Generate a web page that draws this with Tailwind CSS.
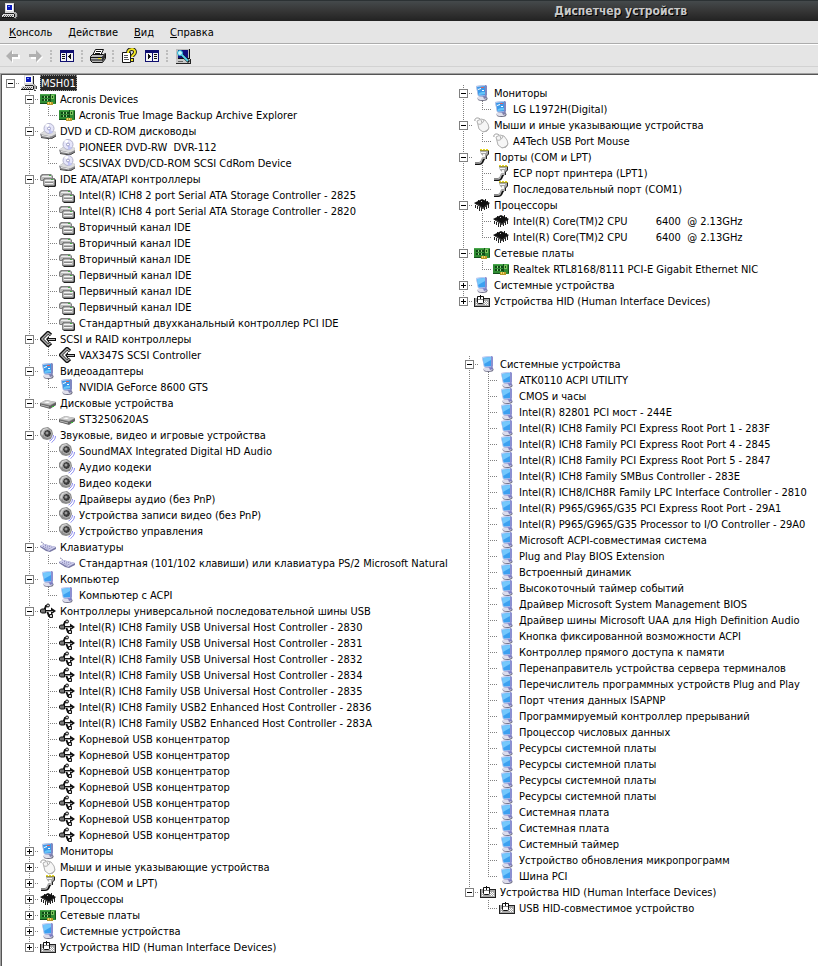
<!DOCTYPE html>
<html lang="ru">
  <head>
    <meta charset="utf-8" />
    <title>Диспетчер устройств</title>
    <script src="https://cdn.jsdelivr.net/npm/@tailwindcss/browser@4"></script>
  </head>
  <body
    class="flex min-h-screen flex-col bg-[#e5e5e5] font-['DejaVu_Sans_Condensed','DejaVu_Sans',sans-serif] text-[11px] leading-4 text-black"
  >
    <!-- icon set -->
    <svg class="hidden">
      <symbol id="pc" viewBox="0 0 16 16">
        <g shape-rendering="crispEdges">
          <path d="M3 0h9v10H3z" fill="#d8d8d8" />
          <path d="M12 1h1v9h-1zM4 10h9v1H4z" fill="#222" />
          <path d="M4 1h7v7H4z" fill="#fff" />
          <path d="M5 2h5v5H5z" fill="#0a18b8" />
          <path d="M6 3h2v1H6z" fill="#7a9cff" />
          <path d="M1 11h11v1H1zM0 12h12v2H0z" fill="#ddd" />
          <path d="M0 14h13v1H0zM12 11h1v3h-1z" fill="#111" />
          <path d="M2 12h1v1H2zM4 12h1v1H4zM6 12h1v1H6zM8 12h1v1H8zM10 12h1v1h-1zM1 13h1v1H1zM3 13h1v1H3zM5 13h1v1H5zM7 13h1v1H7zM9 13h1v1H9z" fill="#555" />
          <path d="M12 9h2v1h1v4h-1v1h-2v-1h1v-3h-1z" fill="#aaa" />
          <path d="M15 11h1v3h-1zM13 15h2v1h-2z" fill="#444" />
        </g>
      </symbol>
      <symbol id="card" viewBox="0 0 16 16">
        <g shape-rendering="crispEdges">
          <path d="M0 3h16v10H0z" fill="#2f8c33" />
          <path d="M0 3h16v1H0z" fill="#4aa84c" />
          <path d="M2 5h2v2H2zM5 5h2v2H5zM8 5h2v2H8zM2 8h2v2H2zM5 8h2v2H5zM8 8h2v2H8z" fill="#0f4a15" />
          <path d="M4 5h1v2H4zM7 5h1v2H7zM4 8h1v2H4zM7 8h1v2H7z" fill="#8fcc80" />
          <path d="M11 4h3v4h-3z" fill="#7cc45c" />
          <path d="M12 5h1v2h-1z" fill="#124f16" />
          <path d="M10 3h1v9h-1zM15 4h1v8h-1zM0 12h7v1H0z" fill="#14501a" />
          <path d="M7 11h6v3H7z" fill="#b9992a" />
          <path d="M8 11h1v2H8zM10 11h1v2h-1z" fill="#f0dc68" />
        </g>
      </symbol>
      <symbol id="cd" viewBox="0 0 16 16">
        <path d="M0 11l4-3h11l1 3v2l-5 3-10-2z" fill="#88888c" />
        <path d="M0 11l4-3h11l1 3-5 2.500z" fill="#dcdcde" />
        <path d="M2 12.500l8 1.500" stroke="#e8e8e8" />
        <path d="M1 14.500l10 1.500 5-3" stroke="#444" fill="none" />
        <circle cx="9" cy="5.500" r="5" fill="#e6e6fa" stroke="#b4b4cc" />
        <path d="M9 5.500L5 2a5 5 0 0 1 4-1z" fill="#fff" />
        <path d="M9 5.500l4 4a5 5 0 0 1-4 1z" fill="#c0c4f4" />
        <circle cx="9" cy="5.500" r="1.500" fill="#fff" stroke="#9c9cc4" />
      </symbol>
      <symbol id="ide" viewBox="0 0 16 16">
        <path d="M0 5l2-2h9l2 2v5H1L0 9z" fill="#808080" />
        <path d="M1 6l2-2h8l1 1v4H1z" fill="#bcbcbc" />
        <path d="M2 5.500h9" stroke="#eee" />
        <path d="M3 9l2-2h9l2 2v6l-1 1H5l-2-2z" fill="#222" />
        <path d="M3 9l2-2h9l1 2v5l-1 1H5l-2-1z" fill="#808080" />
        <path d="M4 9l2-1h7l1 1v5H4z" fill="#b8b8b8" />
        <path d="M5 9.500h9M5 12.500h8" stroke="#f4f4f4" />
        <path d="M5 11.500h8" stroke="#888" />
        <path d="M11 8h2v1h-2zM9 4h2v1H9z" fill="#4a4" />
      </symbol>
      <symbol id="scsi" viewBox="0 0 16 16">
        <path d="M11 4L8 1.500 1.500 8 8 14.500 11 12" fill="none" stroke="#111" stroke-width="3.500" />
        <path d="M10.500 4L8 2 2 8l6 6 2.500-2" fill="none" stroke="#a8a8a8" stroke-width="1.500" />
        <path d="M6 8l3-3v2h7v3H9v2z" fill="#111" />
        <path d="M8 8.500h7" stroke="#bbb" />
      </symbol>
      <symbol id="comp" viewBox="0 0 16 16">
        <ellipse cx="8.500" cy="13.500" rx="5" ry="2.500" fill="#74748c" />
        <ellipse cx="8" cy="13" rx="4.500" ry="2" fill="#dcdcec" />
        <path d="M8 9l4-1 1 5-3 1z" fill="#7c7cc0" />
        <path d="M2 1l10-1 1 1v9l-2 2-7-1z" fill="#8c90d0" />
        <path d="M2 1l9-1v10.500L4 11z" fill="#c0d4f8" />
        <path d="M3 2l8-1v9l-6.500.500z" fill="#3ca0f0" />
        <path d="M3 2l8-1v3L4 8z" fill="#74c8fc" />
      </symbol>
      <symbol id="display" viewBox="0 0 16 16">
        <ellipse cx="8.500" cy="13.500" rx="5" ry="2.500" fill="#6c6c80" />
        <ellipse cx="8" cy="13" rx="4.500" ry="2" fill="#e0e0ec" />
        <path d="M8 9l4-1 1 5-3 1z" fill="#8080a8" />
        <path d="M2 1l10-1 1 1v9l-2 2-7-1z" fill="#8088c0" />
        <path d="M2 1l9-1v10.500L4 11z" fill="#b8ccf0" />
        <path d="M3 2l8-1v9l-6.500.500z" fill="#3c98e8" />
        <path d="M4 4l3-1v1L4 5zM8 5h2v1H8z" fill="#fff" />
        <path d="M5 8l3-1h3v2l-6 1z" fill="#66c6f8" />
        <path d="M7 2h3v1H7z" fill="#d86060" />
      </symbol>
      <symbol id="disk" viewBox="0 0 16 16">
        <path d="M0 8l6-3 10 2v3l-6 4-10-3z" fill="#888" />
        <path d="M0 8l6-3 10 2-6 3z" fill="#c8c8c8" />
        <path d="M4 7.500l3-1 3 .5-2 1z" fill="#fff" />
        <path d="M0 8.500l10 2.500 6-3.500v2.500l-6 3.500L0 11z" fill="#606060" />
        <path d="M1 10l8 2" stroke="#bbb" />
        <path d="M12 11h2v1h-2z" fill="#3b3" />
      </symbol>
      <symbol id="sound" viewBox="0 0 16 16">
        <path d="M13.500 8c0 3-2 5-4 6M15.500 9c0 3-2 5-4 6.500" stroke="#8c8cf0" fill="none" />
        <path d="M3 1l5-1 4 3 1 4-2 5-4 1-4-1-3-4V4z" fill="#8c8c8c" />
        <path d="M3 2l4-1 2 1-5 3-2 4-1-3z" fill="#d4d4d4" />
        <circle cx="7.500" cy="6.500" r="4" fill="#3c3c3c" stroke="#c4c4c4" />
        <circle cx="7" cy="6" r="1.500" fill="#999" />
      </symbol>
      <symbol id="keyboard" viewBox="0 0 16 16">
        <path d="M1 3c2 0 2 3 5 3" stroke="#8c8cb4" fill="none" />
        <path d="M0 7l4-2 12 3v2l-6 3-4-1-6-4z" fill="#7878a4" />
        <path d="M0 7l4-2 12 3-7 4z" fill="#d0d0ee" />
        <path d="M3 7.500l8 2.500M5 6.500l8 2M2 8.500l7 2.500" stroke="#8484b4" stroke-dasharray="1 1" />
      </symbol>
      <symbol id="usb" viewBox="0 0 16 16">
        <path d="M2 8h11M4 8l2-5h2M7 8l2 5h2" stroke="#111" stroke-width="2" fill="none" />
        <path d="M.5 7l1-1h4v4h-4l-1-1z" fill="#777" stroke="#111" />
        <path d="M11 4.500l5 3.500-5 3.500z" fill="#111" />
        <circle cx="8" cy="2.500" r="1.500" fill="#ccc" stroke="#111" />
        <path d="M9.500 11.500h3v3h-3z" fill="#ccc" stroke="#111" />
        <path d="M6 8.500h7" stroke="#999" />
      </symbol>
      <symbol id="mouse" viewBox="0 0 16 16">
        <path d="M1 4c-1-3 3-4 5-2" stroke="#999" fill="none" />
        <path d="M3 4l4-2 4 1 3 4 1 4-2 3-4 1-4-3z" fill="#f6f6f6" stroke="#b0b0b0" />
        <path d="M4 7c3 1 5-1 6-4M7 3l1 3" stroke="#b0b0b0" fill="none" />
        <path d="M8 15h4l3-3V9c0 3-3 5-7 6z" fill="#b0b0b0" />
      </symbol>
      <symbol id="port" viewBox="0 0 16 16">
        <path d="M1 14.500h4c5 0 2-4 6-6" stroke="#111" stroke-width="3" fill="none" />
        <path d="M1 14h4c4 0 1-4 5-6" stroke="#b0b0b0" stroke-width="1.500" fill="none" />
        <path d="M6 2h9v3l-2 2v3h-4V7L7 5z" fill="#a8a8a8" />
        <path d="M14 2h1v3l-2 2v3h-1V7l2-2z" fill="#222" />
        <path d="M7 3h5v1H7zM9 5h2v3H9z" fill="#f4f4f4" />
        <path d="M6 .5h9" stroke="#e8d820" stroke-dasharray="2 1" />
        <path d="M6 1.500h9" stroke="#a09830" />
      </symbol>
      <symbol id="cpu" viewBox="0 0 16 16">
        <path d="M1.500 8v3M3.500 9v3M5.500 10v4M7.500 11v3M10.500 10v3M12.500 9v3M14.500 7v4M4.500 3v2M2.500 5v1M11.500 2v2M13.500 4v1" stroke="#222" />
        <path d="M0 6l8-4 8 4-7 6z" fill="#111" />
        <path d="M3 7l6 4 5-4" stroke="#444" fill="none" />
        <path d="M7 4h1v1H7z" fill="#ccc" />
      </symbol>
      <symbol id="hid" viewBox="0 0 16 16">
        <g shape-rendering="crispEdges">
          <path d="M0 5h16v9H0z" fill="#a8a8a8" />
          <path d="M0 5h1v9H0zM10 5h6v1h-6zM0 13h16v1H0zM15 5h1v9h-1z" fill="#222" />
          <path d="M10 8h1v1h-1zM12 8h1v1h-1zM11 9h1v1h-1zM13 9h1v1h-1zM10 10h1v1h-1zM12 10h1v1h-1zM11 11h1v1h-1zM13 11h1v1h-1zM2 9h1v1H2zM2 11h1v1H2z" fill="#fff" />
        </g>
        <path d="M3.500 3.500h6v6l-1 1h-4l-1-1z" fill="#fff" stroke="#111" />
        <path d="M6.500 2v4" stroke="#111" />
        <path d="M4 6.500h5" stroke="#888" />
      </symbol>
      <symbol id="back" viewBox="0 0 16 16">
        <path d="M2 9l6-6v4h7v4H8v4z" fill="#fff" />
        <path d="M1 8l6-6v4h6v3H7v5z" fill="#b0b0b0" />
      </symbol>
      <symbol id="forward" viewBox="0 0 16 16">
        <path d="M15 9L9 3v4H3v4h6v4z" fill="#fff" />
        <path d="M14 8L8 2v4H1v3h7v5z" fill="#b0b0b0" />
      </symbol>
      <symbol id="panel-left" viewBox="0 0 16 16">
        <g shape-rendering="crispEdges">
          <path d="M1 2h14v12H1z" fill="#101070" />
          <path d="M2 5h5v8H2zM8 5h6v8H8z" fill="#f4f4f4" />
          <path d="M3 6h3v1H3zM3 8h3v1H3zM3 10h3v1H3zM9 8h1v1H9zM10 7h1v3h-1zM11 6h1v5h-1z" fill="#111" />
        </g>
      </symbol>
      <symbol id="panel-right" viewBox="0 0 16 16">
        <g shape-rendering="crispEdges">
          <path d="M1 2h14v12H1z" fill="#101070" />
          <path d="M2 5h6v8H2zM9 5h5v8H9z" fill="#f4f4f4" />
          <path d="M10 6h3v1h-3zM10 8h3v1h-3zM10 10h3v1h-3zM6 8h1v1H6zM5 7h1v3H5zM4 6h1v5H4z" fill="#111" />
        </g>
      </symbol>
      <symbol id="printer" viewBox="0 0 16 16">
        <path d="M5.500 1.500h8l-3 6h-8z" fill="#fff" stroke="#111" />
        <path d="M6 3.500h5M5 5.500h5" stroke="#111" />
        <path d="M.5 8.500l2-2h11l2-1v5l-3 4H2.500l-2-2z" fill="#b8b8b8" stroke="#111" />
        <path d="M1 9.500h11l3-3M1 12h11" stroke="#111" fill="none" />
        <path d="M12 9v5l3-4V6z" fill="#333" />
        <path d="M8 10.500h3" stroke="#e8e020" />
      </symbol>
      <symbol id="help" viewBox="0 0 16 16">
        <path d="M1.500 4.500h8v10h-8z" fill="#fff" stroke="#111" />
        <path d="M3 7.500h4M3 9.500h4M3 11.500h5" stroke="#555" />
        <path d="M7 5c0-5 7-5 7-1 0 3-3 3-3 5" stroke="#222" stroke-width="4" fill="none" />
        <path d="M9 10h4v4H9z" fill="#222" />
        <path d="M7 5c0-5 7-5 7-1 0 3-3 3-3 5" stroke="#f4e820" stroke-width="2" fill="none" />
        <path d="M10 11h2v2h-2z" fill="#f4e820" />
      </symbol>
      <symbol id="scan" viewBox="0 0 16 16">
        <g shape-rendering="crispEdges">
          <path d="M1 1h13v10H1z" fill="#bcbcbc" />
          <path d="M3 2h10v8H3z" fill="#10107c" />
          <path d="M14 1h1v10h-1zM3 10h11v1H3z" fill="#111" />
          <path d="M1 11h14v4H1z" fill="#c8c8c8" />
          <path d="M1 15h15v1H1zM15 11h1v4h-1z" fill="#222" />
          <path d="M3 13h5v1H3z" fill="#666" />
        </g>
        <path d="M6 6l8 8" stroke="#111" stroke-width="3" />
        <path d="M6 6l7 7" stroke="#58d4ec" stroke-width="2" />
        <circle cx="5" cy="5" r="2.500" fill="#c4f4fc" stroke="#28b4d4" />
      </symbol>

      <!-- tree guide lines -->
      <symbol id="guide-pass" viewBox="0 0 19 16">
        <path d="M9.500 0v16" stroke="#808080" stroke-dasharray="1 1" />
      </symbol>
      <symbol id="guide-tee" viewBox="0 0 19 16">
        <path d="M9.500 0v16M9 8.500h10" stroke="#808080" stroke-dasharray="1 1" />
      </symbol>
      <symbol id="guide-end" viewBox="0 0 19 16">
        <path d="M9.500 0v9M9 8.500h10" stroke="#808080" stroke-dasharray="1 1" />
      </symbol>
      <symbol id="guide-root" viewBox="0 0 19 16">
        <path d="M9 8.500h10" stroke="#808080" stroke-dasharray="1 1" />
      </symbol>
    </svg>

    <header
      class="flex h-[21px] items-center border-t border-[#2c3234] bg-linear-to-b from-[#454a4c] via-[#363636] to-[#222222] pl-[2px]"
    >
      <svg class="size-4"><use href="#pc" /></svg>
      <h1
        class="mr-[131px] ml-auto text-[12px] font-bold text-[#c9c9c9] [text-shadow:1px_1px_0_#000]"
      >
        Диспетчер устройств
      </h1>
    </header>

    <nav class="flex h-[23px] items-end border-b border-[#acacac] px-px pb-[2px]">
      <button class="px-2"><u>К</u>онсоль</button>
      <button class="px-2"><u>Д</u>ействие</button>
      <button class="px-2"><u>В</u>ид</button>
      <button class="px-2"><u>С</u>правка</button>
    </nav>

    <div
      class="flex h-[23px] items-center border-t border-b border-t-white border-b-[#d2d2d2] pl-px"
    >
      <button class="flex w-[23px] justify-center" aria-label="Назад">
        <svg class="size-4"><use href="#back" /></svg>
      </button>
      <button class="flex w-[23px] justify-center" aria-label="Вперед">
        <svg class="size-4"><use href="#forward" /></svg>
      </button>
      <span class="mx-[3px] h-3 border-l-2 border-dotted border-[#bdbdbd]"></span>
      <button class="flex w-[23px] justify-center" aria-label="Дерево консоли">
        <svg class="size-4"><use href="#panel-left" /></svg>
      </button>
      <span class="mx-[3px] h-3 border-l-2 border-dotted border-[#bdbdbd]"></span>
      <button class="flex w-[23px] justify-center" aria-label="Печать">
        <svg class="size-4"><use href="#printer" /></svg>
      </button>
      <span class="mx-[3px] h-3 border-l-2 border-dotted border-[#bdbdbd]"></span>
      <button class="flex w-[23px] justify-center" aria-label="Справка">
        <svg class="size-4"><use href="#help" /></svg>
      </button>
      <button class="flex w-[23px] justify-center" aria-label="Панель действий">
        <svg class="size-4"><use href="#panel-right" /></svg>
      </button>
      <span class="mx-[3px] h-3 border-l-2 border-dotted border-[#bdbdbd]"></span>
      <button
        class="flex w-[23px] justify-center"
        aria-label="Обновить конфигурацию оборудования"
      >
        <svg class="size-4"><use href="#scan" /></svg>
      </button>
    </div>

    <main class="mt-[6px] flex flex-1 border-t border-l border-[#a0a0a0]">
      <div
        class="grid flex-1 grid-cols-[452px_1fr] border-t border-l border-[#555555] bg-white"
      >
        <div id="tree-main" class="-ml-px"></div>
        <div class="pt-[10px]">
          <div id="tree-devices"></div>
          <div id="tree-system" class="mt-[47px] ml-[6px]"></div>
        </div>
      </div>
    </main>

    <script>
      // [icon, label, children]; "+" instead of children = collapsed
      const group = (icon, label, items) => [
        icon,
        label,
        items.map((text) => [icon, text]),
      ];

      const mainTree = [
        group("card", "Acronis Devices", [
          "Acronis True Image Backup Archive Explorer",
        ]),
        group("cd", "DVD и CD-ROM дисководы", [
          "PIONEER DVD-RW  DVR-112",
          "SCSIVAX DVD/CD-ROM SCSI CdRom Device",
        ]),
        group("ide", "IDE ATA/ATAPI контроллеры", [
          "Intel(R) ICH8 2 port Serial ATA Storage Controller - 2825",
          "Intel(R) ICH8 4 port Serial ATA Storage Controller - 2820",
          "Вторичный канал IDE",
          "Вторичный канал IDE",
          "Вторичный канал IDE",
          "Первичный канал IDE",
          "Первичный канал IDE",
          "Первичный канал IDE",
          "Стандартный двухканальный контроллер PCI IDE",
        ]),
        group("scsi", "SCSI и RAID контроллеры", ["VAX347S SCSI Controller"]),
        group("display", "Видеоадаптеры", ["NVIDIA GeForce 8600 GTS"]),
        group("disk", "Дисковые устройства", ["ST3250620AS"]),
        group("sound", "Звуковые, видео и игровые устройства", [
          "SoundMAX Integrated Digital HD Audio",
          "Аудио кодеки",
          "Видео кодеки",
          "Драйверы аудио (без PnP)",
          "Устройства записи видео (без PnP)",
          "Устройство управления",
        ]),
        group("keyboard", "Клавиатуры", [
          "Стандартная (101/102 клавиши) или клавиатура PS/2 Microsoft Natural",
        ]),
        group("comp", "Компьютер", ["Компьютер с ACPI"]),
        group("usb", "Контроллеры универсальной последовательной шины USB", [
          "Intel(R) ICH8 Family USB Universal Host Controller - 2830",
          "Intel(R) ICH8 Family USB Universal Host Controller - 2831",
          "Intel(R) ICH8 Family USB Universal Host Controller - 2832",
          "Intel(R) ICH8 Family USB Universal Host Controller - 2834",
          "Intel(R) ICH8 Family USB Universal Host Controller - 2835",
          "Intel(R) ICH8 Family USB2 Enhanced Host Controller - 2836",
          "Intel(R) ICH8 Family USB2 Enhanced Host Controller - 283A",
          "Корневой USB концентратор",
          "Корневой USB концентратор",
          "Корневой USB концентратор",
          "Корневой USB концентратор",
          "Корневой USB концентратор",
          "Корневой USB концентратор",
          "Корневой USB концентратор",
        ]),
        ["display", "Мониторы", "+"],
        ["mouse", "Мыши и иные указывающие устройства", "+"],
        ["port", "Порты (COM и LPT)", "+"],
        ["cpu", "Процессоры", "+"],
        ["card", "Сетевые платы", "+"],
        ["comp", "Системные устройства", "+"],
        ["hid", "Устройства HID (Human Interface Devices)", "+"],
      ];

      const deviceTree = [
        group("display", "Мониторы", ["LG L1972H(Digital)"]),
        group("mouse", "Мыши и иные указывающие устройства", [
          "A4Tech USB Port Mouse",
        ]),
        group("port", "Порты (COM и LPT)", [
          "ECP порт принтера (LPT1)",
          "Последовательный порт (COM1)",
        ]),
        group("cpu", "Процессоры", [
          "Intel(R) Core(TM)2 CPU         6400  @ 2.13GHz",
          "Intel(R) Core(TM)2 CPU         6400  @ 2.13GHz",
        ]),
        group("card", "Сетевые платы", [
          "Realtek RTL8168/8111 PCI-E Gigabit Ethernet NIC",
        ]),
        ["comp", "Системные устройства", "+"],
        ["hid", "Устройства HID (Human Interface Devices)", "+"],
      ];

      const systemTree = [
        group("comp", "Системные устройства", [
          "ATK0110 ACPI UTILITY",
          "CMOS и часы",
          "Intel(R) 82801 PCI мост - 244E",
          "Intel(R) ICH8 Family PCI Express Root Port 1 - 283F",
          "Intel(R) ICH8 Family PCI Express Root Port 4 - 2845",
          "Intel(R) ICH8 Family PCI Express Root Port 5 - 2847",
          "Intel(R) ICH8 Family SMBus Controller - 283E",
          "Intel(R) ICH8/ICH8R Family LPC Interface Controller - 2810",
          "Intel(R) P965/G965/G35 PCI Express Root Port - 29A1",
          "Intel(R) P965/G965/G35 Processor to I/O Controller - 29A0",
          "Microsoft ACPI-совместимая система",
          "Plug and Play BIOS Extension",
          "Встроенный динамик",
          "Высокоточный таймер событий",
          "Драйвер Microsoft System Management BIOS",
          "Драйвер шины Microsoft UAA для High Definition Audio",
          "Кнопка фиксированной возможности ACPI",
          "Контроллер прямого доступа к памяти",
          "Перенаправитель устройства сервера терминалов",
          "Перечислитель программных устройств Plug and Play",
          "Порт чтения данных ISAPNP",
          "Программируемый контроллер прерываний",
          "Процессор числовых данных",
          "Ресурсы системной платы",
          "Ресурсы системной платы",
          "Ресурсы системной платы",
          "Ресурсы системной платы",
          "Системная плата",
          "Системная плата",
          "Системный таймер",
          "Устройство обновления микропрограмм",
          "Шина PCI",
        ]),
        group("hid", "Устройства HID (Human Interface Devices)", [
          "USB HID-совместимое устройство",
        ]),
      ];

      const cell = (guide, inner = "") =>
        `<span class="relative h-4 w-[19px] shrink-0">${
          guide ? `<svg class="h-4 w-[19px]"><use href="#${guide}" /></svg>` : ""
        }${inner}</span>`;

      const expander = (closed) =>
        `<button aria-label="${closed ? "Развернуть" : "Свернуть"}" class="absolute top-1 left-[5px] size-[9px] border border-[#808080] bg-white">
          <svg class="size-[7px]" viewBox="0 0 7 7"><path d="M1 3.500h5${closed ? "M3.500 1v5" : ""}" stroke="#000" /></svg>
        </button>`;

      function row(guides, guide, [icon, label, children], selected) {
        const box = children ? expander(children === "+") : "";
        const mark = selected
          ? "bg-[#262626] text-white outline-1 -outline-offset-1 outline-dotted outline-[#999999]"
          : "";
        return `<div class="flex h-4 items-center">
          ${guides.map((g) => cell(g)).join("")}${cell(guide, box)}
          <svg class="ml-px size-4 shrink-0"><use href="#${icon}" /></svg>
          <span class="ml-[3px] h-4 px-px leading-[18px] whitespace-pre ${mark}">${label}</span>
        </div>`;
      }

      function rows(nodes, guides) {
        return nodes
          .map((node, i) => {
            const last = i === nodes.length - 1;
            const children = Array.isArray(node[2]) ? node[2] : [];
            return (
              row(guides, last ? "guide-end" : "guide-tee", node) +
              rows(children, [...guides, last ? "" : "guide-pass"])
            );
          })
          .join("");
      }

      document.getElementById("tree-main").innerHTML =
        row([], "guide-root", ["pc", "MSH01", mainTree], true) +
        rows(mainTree, [""]);
      document.getElementById("tree-devices").innerHTML = rows(deviceTree, []);
      document.getElementById("tree-system").innerHTML = rows(systemTree, []);
    </script>
  </body>
</html>
